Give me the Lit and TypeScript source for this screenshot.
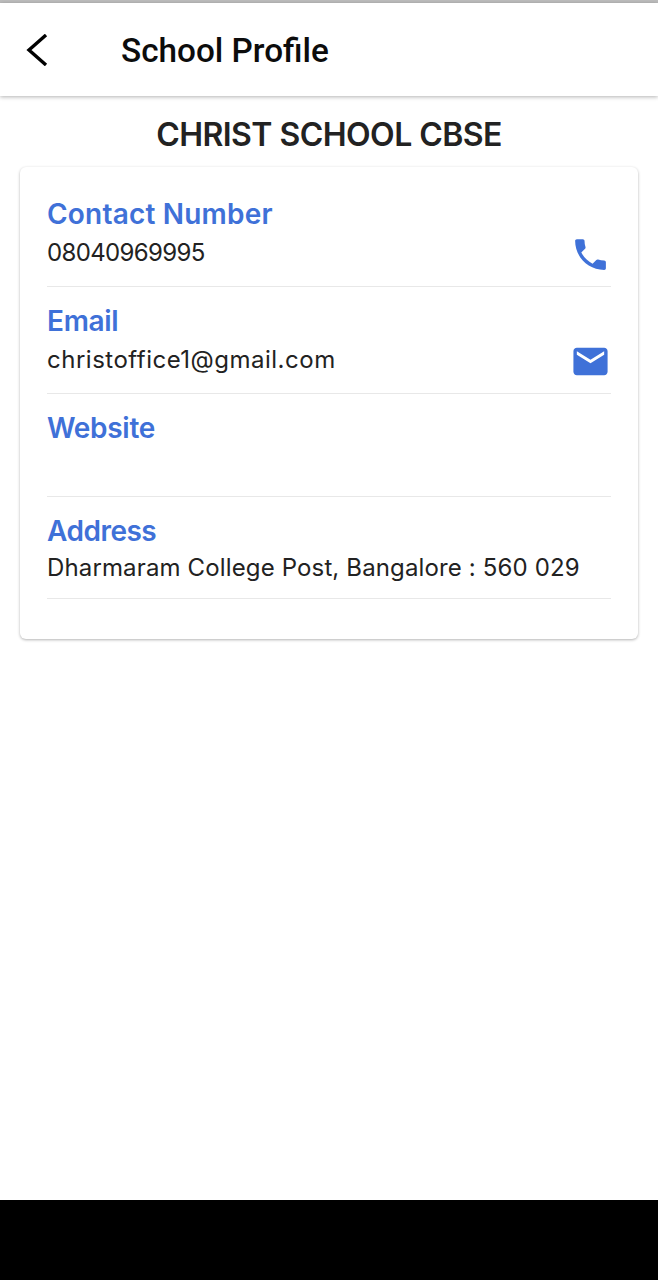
import { LitElement, html, css } from 'lit';
import { customElement } from 'lit/decorators.js';

// Inter stands in for the original geometric face, so each line gets its own tracking to keep its width
const rows = [
  { label: 'Contact Number', labelTracking: 0.2, value: '08040969995', icon: 'phone', tracking: -0.64 },
  { label: 'Email', labelTracking: -0.3, value: 'christoffice1@gmail.com', icon: 'mail', tracking: 0.5 },
  { label: 'Website', labelTracking: -0.3, value: '', icon: '', tracking: 0 },
  { label: 'Address', labelTracking: -0.5, value: 'Dharmaram College Post, Bangalore : 560 029', icon: '', tracking: 0.14 },
];

@customElement('app-root')
export class AppRoot extends LitElement {
  static styles = css`
    :host {
      display: block;
      height: 1280px;
      background: #fff;
      font-family: 'Inter', 'Liberation Sans', sans-serif;
      overflow: hidden;
    }
    .page {
      height: 1200px;
      background: #fff;
    }
    .status {
      height: 3px;
      background: #bdbdbd;
    }
    .toolbar {
      height: 93px;
      display: flex;
      align-items: center;
      background: #fff;
      box-shadow: 0 1px 4px rgba(0, 0, 0, 0.3);
    }
    .back {
      width: 121px;
      display: flex;
      padding-left: 26px;
      box-sizing: border-box;
    }
    .toolbar h1 {
      margin: 0;
      padding-top: 2px;
      font: 500 33.3px 'Roboto', sans-serif;
      color: #0c0c0c;
    }
    .school {
      margin: 0;
      padding-top: 17px;
      height: 55px;
      box-sizing: border-box;
      font-size: 32px;
      line-height: 44px;
      font-weight: 600;
      letter-spacing: -0.55px;
      text-align: center;
      color: #222;
    }
    .card {
      margin: 16px 20px 0;
      padding: 13px 27px 40px;
      background: #fff;
      border-radius: 6px;
      box-shadow: 0 1px 3px rgba(0, 0, 0, 0.3);
    }
    .row {
      padding: 17px 0 11px;
      border-bottom: 1px solid #e8e8e8;
    }
    .row:last-child {
      padding-bottom: 10px;
    }
    .label {
      font-size: 28px;
      line-height: 34px;
      font-weight: 600;
      color: #3f71d8;
    }
    .body {
      display: flex;
      align-items: center;
      justify-content: space-between;
      min-height: 40px;
    }
    .value {
      font-size: 24px;
      line-height: 40px;
      color: #222;
    }
    .icon {
      width: 41px;
      height: 41px;
      flex: none;
      margin-top: 3px;
    }
    .bottom {
      height: 80px;
      background: #000;
    }
  `;

  private _icon(name: string) {
    if (name === 'phone') {
      return html`<svg class="icon" viewBox="0 0 24 24" fill="#3f71d8">
        <path d="M6.62 10.79c1.44 2.83 3.76 5.14 6.59 6.59l2.2-2.2c.27-.27.67-.36 1.02-.24 1.12.37 2.33.57 3.57.57.55 0 1 .45 1 1V20c0 .55-.45 1-1 1-9.39 0-17-7.61-17-17 0-.55.45-1 1-1h3.5c.55 0 1 .45 1 1 0 1.25.2 2.45.57 3.57.11.35.03.74-.25 1.02l-2.2 2.2z" />
      </svg>`;
    }
    if (name === 'mail') {
      return html`<svg class="icon" viewBox="0 0 24 24" fill="#3f71d8">
        <path d="M20 4H4c-1.1 0-1.99.9-1.99 2L2 18c0 1.1.9 2 2 2h16c1.1 0 2-.9 2-2V6c0-1.1-.9-2-2-2zm0 4l-8 5-8-5V6l8 5 8-5v2z" />
      </svg>`;
    }
    return '';
  }

  render() {
    return html`
      <div class="page">
        <div class="status"></div>
        <div class="toolbar">
          <div class="back">
            <svg width="22" height="32" viewBox="0 0 22 32">
              <path d="M20 1 L3 16 L20 31" fill="none" stroke="#000" stroke-width="3.4" />
            </svg>
          </div>
          <h1>School Profile</h1>
        </div>
        <h2 class="school">CHRIST SCHOOL CBSE</h2>
        <div class="card">
          ${rows.map(
            (r) => html`
              <div class="row">
                <div class="label" style="letter-spacing: ${r.labelTracking}px">${r.label}</div>
                <div class="body">
                  <span class="value" style="letter-spacing: ${r.tracking}px">${r.value}</span>
                  ${this._icon(r.icon)}
                </div>
              </div>
            `
          )}
        </div>
      </div>
      <div class="bottom"></div>
    `;
  }
}
